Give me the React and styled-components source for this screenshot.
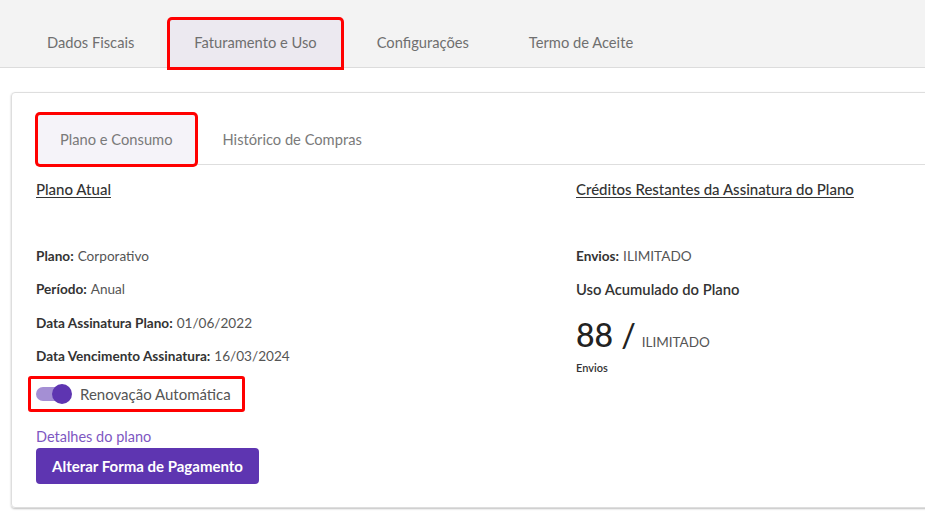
import React from 'react'
import styled, { createGlobalStyle } from 'styled-components'

const GlobalStyle = createGlobalStyle`
  html, body {
    margin: 0;
    padding: 0;
    background: #fff;
    overflow: hidden;
  }
  body {
    font-family: Lato, "Open Sans", sans-serif;
    color: #333;
  }
`

const Page = styled.div`
  width: 925px;
  height: 524px;
  overflow: hidden;
`

const TopBar = styled.div`
  height: 67px;
  background: #f3f3f3;
  border-bottom: 1px solid #dcdcdc;
  display: flex;
  align-items: flex-end;
  padding-left: 23px;
  gap: 12px;
`

const TopTab = styled.div`
  height: 47px;
  padding: 0 24px 3px;
  box-sizing: border-box;
  display: flex;
  align-items: center;
  font-size: 14.7px;
  color: #6f6f6f;
  background: ${p => (p.$active ? '#ece9f0' : 'transparent')};
  border-radius: 2px 2px 0 0;
  box-shadow: ${p => (p.$marked ? '0 0 0 3px #ff0000' : 'none')};
`

const Body = styled.div`
  padding: 24px 0 0 11px;
`

const Card = styled.div`
  width: 960px;
  border: 1px solid #dedede;
  border-radius: 4px;
  box-shadow: 0 1px 2px rgba(0, 0, 0, 0.25);
  padding: 22px 0 23px 24px;
  box-sizing: border-box;
`

const SubTabs = styled.div`
  display: flex;
  gap: 6px;
  border-bottom: 1px solid #dedede;
  padding-left: 2px;
`

const SubTab = styled.div`
  height: 49px;
  padding: 0 22px 1px;
  box-sizing: border-box;
  display: flex;
  align-items: center;
  font-size: 14.7px;
  color: #7a7a7a;
  background: ${p => (p.$active ? '#f5f3f9' : 'transparent')};
  box-shadow: ${p => (p.$marked ? '0 0 0 3px #ff0000' : 'none')};
  border-radius: 2px;
`

const Columns = styled.div`
  display: grid;
  grid-template-columns: 540px 1fr;
  padding-top: 14px;
`

const Column = styled.div`
  display: flex;
  flex-direction: column;
  align-items: flex-start;
`

const Heading = styled.div`
  font-size: 15px;
  font-weight: 500;
  color: #333;
  text-decoration: underline;
  text-underline-offset: 2px;
  line-height: 20px;
  margin-bottom: 40px;
`

const Row = styled.div`
  font-size: 13.6px;
  line-height: 20px;
  height: 33.5px;
  display: flex;
  align-items: center;
  color: #555;
  white-space: nowrap;
`

const Label = styled.span`
  color: #333;
  margin-right: 4px;
  font-size: ${p => (p.$large ? '14.8px' : 'inherit')};
  font-weight: ${p => (p.$large ? 600 : 700)};
`

const ToggleBox = styled.div`
  display: flex;
  align-items: center;
  gap: 10px;
  margin: 3px 0 0 -8px;
  padding: 6px 11px 6px 5px;
  border: 3px solid #ff0000;
  border-radius: 3px;
  font-size: 15px;
  color: #555;
`

const Track = styled.div`
  position: relative;
  width: 34px;
  height: 14px;
  border-radius: 7px;
  background: #a48fd4;
`

const Knob = styled.div`
  position: absolute;
  top: -3px;
  right: -2px;
  width: 20px;
  height: 20px;
  border-radius: 50%;
  background: #5e35b1;
`

const Link = styled.a`
  margin-top: 17px;
  font-size: 14.5px;
  color: #7e57c2;
  text-decoration: none;
  line-height: 16px;
`

const Button = styled.button`
  margin-top: 3px;
  height: 36px;
  width: 223px;
  border: none;
  border-radius: 4px;
  background: #5e35b1;
  color: #fff;
  font-family: inherit;
  font-size: 15px;
  font-weight: 700;
`

const Big = styled.div`
  display: flex;
  align-items: baseline;
  margin-top: 12px;
  line-height: 34px;
`

const BigNumber = styled.span`
  font-size: 32px;
  font-weight: 500;
  color: #222;
  margin-right: 6px;
`

const BigUnit = styled.span`
  font-size: 13.5px;
  color: #555;
`

const Caption = styled.div`
  margin-top: 2px;
  font-size: 11px;
  font-weight: 600;
  color: #333;
`

export default function App() {
  return (
    <Page>
      <GlobalStyle />
      <TopBar>
        <TopTab>Dados Fiscais</TopTab>
        <TopTab $active $marked>Faturamento e Uso</TopTab>
        <TopTab>Configurações</TopTab>
        <TopTab>Termo de Aceite</TopTab>
      </TopBar>
      <Body>
        <Card>
          <SubTabs>
            <SubTab $active $marked>Plano e Consumo</SubTab>
            <SubTab>Histórico de Compras</SubTab>
          </SubTabs>
          <Columns>
            <Column>
              <Heading>Plano Atual</Heading>
              <Row><Label>Plano:</Label>Corporativo</Row>
              <Row><Label>Período:</Label>Anual</Row>
              <Row><Label>Data Assinatura Plano:</Label>01/06/2022</Row>
              <Row><Label>Data Vencimento Assinatura:</Label>16/03/2024</Row>
              <ToggleBox>
                <Track><Knob /></Track>
                Renovação Automática
              </ToggleBox>
              <Link href="#">Detalhes do plano</Link>
              <Button>Alterar Forma de Pagamento</Button>
            </Column>
            <Column>
              <Heading>Créditos Restantes da Assinatura do Plano</Heading>
              <Row><Label>Envios:</Label>ILIMITADO</Row>
              <Row><Label $large>Uso Acumulado do Plano</Label></Row>
              <Big>
                <BigNumber>88 /</BigNumber>
                <BigUnit>ILIMITADO</BigUnit>
              </Big>
              <Caption>Envios</Caption>
            </Column>
          </Columns>
        </Card>
      </Body>
    </Page>
  )
}
